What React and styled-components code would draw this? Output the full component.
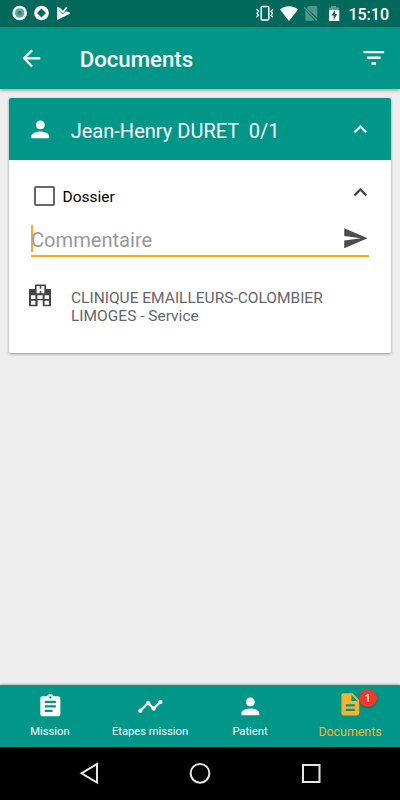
import React from 'react';
import styled, { createGlobalStyle } from 'styled-components';

const paths = {
  back: 'M20 11H7.83l5.59-5.59L12 4l-8 8 8 8 1.41-1.41L7.83 13H20v-2z',
  filter: 'M10 18h4v-2h-4v2zM3 6v2h18V6H3zm3 7h12v-2H6v2z',
  person:
    'M12 12c2.21 0 4-1.79 4-4s-1.79-4-4-4-4 1.79-4 4 1.79 4 4 4zm0 2c-2.67 0-8 1.34-8 4v2h16v-2c0-2.66-5.33-4-8-4z',
  less: 'M12 8l-6 6 1.41 1.41L12 10.83l4.59 4.58L18 14z',
  send: 'M2.01 21L23 12 2.01 3 2 10l15 2-15 2z',
  hospital:
    'M1 5h6V.5h11V5h5v17.3h-8.3v-6H9.6v6H1zM8.6 2v7.3h3.1V7h1.6v2.3h3.1V2h-3.1v2.7h-1.6V2zM3 11.3V15h4.4v-3.7zM9.4 11.3V15h5.2v-3.7zM16.6 11.3V15H21v-3.7zM3 16.7v4h4.4v-4zM16.6 16.7v4H21v-4z',
  assignment:
    'M19 3h-4.18C14.4 1.84 13.3 1 12 1c-1.3 0-2.4.84-2.82 2H5c-1.1 0-2 .9-2 2v14c0 1.1.9 2 2 2h14c1.1 0 2-.9 2-2V5c0-1.1-.9-2-2-2zm-7 0c.55 0 1 .45 1 1s-.45 1-1 1-1-.45-1-1 .45-1 1-1zm2 14H7v-2h7v2zm3-4H7v-2h10v2zm0-4H7V7h10v2z',
  timeline:
    'M23 8c0 1.1-.9 2-2 2-.18 0-.35-.02-.51-.07l-3.56 3.55c.05.16.07.34.07.52 0 1.1-.9 2-2 2s-2-.9-2-2c0-.18.02-.36.07-.52l-2.55-2.55c-.16.05-.34.07-.52.07s-.36-.02-.52-.07l-4.55 4.56c.05.16.07.33.07.51 0 1.1-.9 2-2 2s-2-.9-2-2 .9-2 2-2c.18 0 .35.02.51.07l4.56-4.55C8.02 9.36 8 9.18 8 9c0-1.1.9-2 2-2s2 .9 2 2c0 .18-.02.36-.07.52l2.55 2.55c.16-.05.34-.07.52-.07s.36.02.52.07l3.55-3.56C19.02 8.35 19 8.18 19 8c0-1.1.9-2 2-2s2 .9 2 2z',
  description:
    'M14 2H6c-1.1 0-1.99.9-1.99 2L4 20c0 1.1.89 2 1.99 2H18c1.1 0 2-.9 2-2V8l-6-6zm2 16H8v-2h8v2zm0-4H8v-2h8v2zm-3-5V3.5L18.5 9H13z',
};

const tabs = [
  { label: 'Mission', icon: 'assignment' },
  { label: 'Etapes mission', icon: 'timeline' },
  { label: 'Patient', icon: 'person' },
  { label: 'Documents', icon: 'description', active: true, count: 1 },
];

const GlobalStyle = createGlobalStyle`
  * {
    box-sizing: border-box;
  }

  body {
    margin: 0;
    font-family: Roboto, sans-serif;
  }
`;

const Screen = styled.div`
  display: flex;
  flex-direction: column;
  width: 400px;
  height: 800px;
  overflow: hidden;
  background: #eee;
`;

const StatusBar = styled.div`
  display: flex;
  justify-content: space-between;
  align-items: center;
  height: 27px;
  padding: 0 11px 0 12px;
  color: #fff;
  background: #00695c;
`;

const StatusGroup = styled.div`
  display: flex;
  align-items: center;
`;

const Clock = styled.span`
  margin-left: 8px;
  font-size: 16px;
  font-weight: 500;
  line-height: 27px;
  padding-top: 2px;
`;

const AppBar = styled.header`
  display: flex;
  align-items: center;
  flex: none;
  height: 62px;
  padding: 0 13px 0 18px;
  color: #fff;
  background: #009688;
  box-shadow: 0 1px 4px rgba(0, 0, 0, 0.4);
`;

const Title = styled.h1`
  flex: 1;
  margin: 2px 0 0 35px;
  font-size: 22.2px;
  font-weight: 500;
`;

const Icon = styled.svg`
  display: block;
  flex: none;
  width: ${({ $size }) => $size || 26.7}px;
  height: ${({ $size }) => $size || 26.7}px;
  fill: currentColor;
  fill-rule: evenodd;
`;

const Content = styled.main`
  flex: 1;
  padding: 9px;
`;

const Card = styled.section`
  height: 255px;
  overflow: hidden;
  border-radius: 2px;
  background: #fff;
  box-shadow: 0 1px 3px rgba(0, 0, 0, 0.4);
`;

const CardHeader = styled.div`
  display: flex;
  align-items: center;
  height: 62px;
  padding: 0 17.5px;
  color: #fff;
  background: #009688;
`;

const PatientName = styled.h2`
  flex: 1;
  margin: 3px 0 0 17.5px;
  font-size: 20.05px;
  font-weight: 400;
  white-space: pre;
`;

const DocumentRow = styled.div`
  display: flex;
  align-items: center;
  height: 66px;
  padding: 6px 17.5px 0 25px;
  color: #000;
  font-size: 15.5px;
`;

const Checkbox = styled.span`
  width: 21px;
  height: 20px;
  margin-right: 7.5px;
  border: 2px solid #666;
  border-radius: 2px;
`;

const RowLabel = styled.span`
  flex: 1;
  padding-top: 2px;
`;

const Toggle = styled.span`
  margin-bottom: 7px;
  color: #444;
`;

const CommentField = styled.div`
  display: flex;
  align-items: center;
  height: 32px;
  margin: -1px 22px 0;
  padding-bottom: 3px;
  border-bottom: 2px solid #ffa917;
  color: #4d4d4d;
`;

const Caret = styled.span`
  width: 2px;
  height: 27px;
  margin-right: -2px;
  background: #ffa917;
`;

const Placeholder = styled.span`
  flex: 1;
  padding-top: 3px;
  color: #999;
  font-size: 20.1px;
`;

const Place = styled.div`
  display: flex;
  margin: 27px 18px 0 19px;
  color: #444;
`;

const Address = styled.p`
  margin: 5px 0 0 19px;
  color: #666;
  font-size: 15.5px;
  line-height: 18px;
`;

const TabBar = styled.nav`
  display: grid;
  grid-template-columns: repeat(4, 1fr);
  flex: none;
  height: 62px;
  background: #009688;
  box-shadow: 0 -1px 2px rgba(0, 0, 0, 0.25);
`;

const Tab = styled.div`
  display: flex;
  flex-direction: column;
  align-items: center;
  padding-top: ${({ $active }) => ($active ? 6 : 8)}px;
  color: ${({ $active }) => ($active ? '#fbb02d' : '#fff')};
`;

const TabIcon = styled.div`
  position: relative;
`;

const TabLabel = styled.span`
  margin-top: ${({ $active }) => ($active ? 7.3 : 5.3)}px;
  font-size: ${({ $active }) => ($active ? 12.4 : 11.2)}px;
  line-height: 14px;
  white-space: nowrap;
`;

const Badge = styled.span`
  position: absolute;
  top: -2px;
  left: 22px;
  width: 18px;
  height: 18px;
  border-radius: 50%;
  color: #fff;
  background: #f4372d;
  box-shadow: 0 1px 2px rgba(0, 0, 0, 0.3);
  font-size: 10px;
  font-weight: 700;
  line-height: 19px;
  text-align: center;
`;

const SystemBar = styled.div`
  display: flex;
  justify-content: center;
  flex: none;
  height: 53px;
  background: #000;
`;

const MaterialIcon = ({ name, size }) => (
  <Icon viewBox="0 0 24 24" $size={size}>
    <path d={paths[name]} />
  </Icon>
);

const Notifications = () => (
  <svg width="60" height="27" fill="#fff">
    <circle cx="7.7" cy="13" r="7.3" />
    <circle cx="7.7" cy="13" r="4.8" fill="#68a69d" />
    <circle cx="7.7" cy="13" r="2.3" fill="#38877c" />
    <circle cx="29.5" cy="13" r="7.3" />
    <path d="M29.5 8.5l4.5 4.5-4.5 4.5L25 13z" fill="#00695c" />
    <path d="M45.2 6.5l3.8 2.3 1.9 2.2 3.2-4.2 1.4 1-2.3 3.3 4.6 1.5v1.2L45.2 20z" />
    <path d="M47.3 10.8l3.4 3.2 4.2-4.5" fill="none" stroke="#00695c" strokeWidth="0.9" />
  </svg>
);

const PhoneState = () => (
  <svg width="84" height="27" fill="#fff">
    <g fill="none" stroke="#fff" strokeWidth="1.3">
      <rect x="5.2" y="6.6" width="7.6" height="13.4" rx="1" strokeWidth="1.5" />
      <path d="M.5 9.3l2 2-1.5 2 1.5 2-2 2M17 9.3l-2 2 1.5 2-1.5 2 2 2" />
    </g>
    <path d="M24 9.5c5-4.3 13-4.3 18 0L33 21z" />
    <g opacity="0.3">
      <path d="M52.8 6H60c.8 0 1.3.5 1.3 1.3V18L50.8 8zM49.3 10.3l9.6 10.4h-8.3c-.8 0-1.3-.5-1.3-1.3z" />
      <path d="M48.3 7.2l12.7 13.3" stroke="#fff" strokeWidth="1.6" />
    </g>
    <path d="M75 6h5v1.5h3V10H73V7.5h2z" opacity="0.35" />
    <path d="M73 10h10.3v11H73zM79 10l-3.5 5.5h2.2V20l3.5-6H79z" fillRule="evenodd" />
  </svg>
);

const BottomTab = ({ label, icon, active, count }) => (
  <Tab $active={active}>
    <TabIcon>
      <MaterialIcon name={icon} />
      {count && <Badge>{count}</Badge>}
    </TabIcon>
    <TabLabel $active={active}>{label}</TabLabel>
  </Tab>
);

const App = () => (
  <>
    <GlobalStyle />
    <Screen>
      <StatusBar>
        <Notifications />
        <StatusGroup>
          <PhoneState />
          <Clock>15:10</Clock>
        </StatusGroup>
      </StatusBar>
      <AppBar>
        <MaterialIcon name="back" />
        <Title>Documents</Title>
        <MaterialIcon name="filter" size={27.5} />
      </AppBar>
      <Content>
        <Card>
          <CardHeader>
            <MaterialIcon name="person" />
            <PatientName>{'Jean-Henry DURET  0/1'}</PatientName>
            <MaterialIcon name="less" />
          </CardHeader>
          <DocumentRow>
            <Checkbox />
            <RowLabel>Dossier</RowLabel>
            <Toggle>
              <MaterialIcon name="less" />
            </Toggle>
          </DocumentRow>
          <CommentField>
            <Caret />
            <Placeholder>Commentaire</Placeholder>
            <MaterialIcon name="send" />
          </CommentField>
          <Place>
            <MaterialIcon name="hospital" size={24} />
            <Address>
              CLINIQUE EMAILLEURS-COLOMBIER
              <br />
              LIMOGES - Service
            </Address>
          </Place>
        </Card>
      </Content>
      <TabBar>
        {tabs.map(tab => (
          <BottomTab key={tab.label} {...tab} />
        ))}
      </TabBar>
      <SystemBar>
        <svg width="400" height="53" fill="none" stroke="#e6e6e6" strokeWidth="2">
          <path d="M97 17v18.5l-15.5-9.2z" />
          <circle cx="200" cy="26.3" r="9.4" />
          <rect x="303" y="18" width="16.5" height="17" />
        </svg>
      </SystemBar>
    </Screen>
  </>
);

export default App;
